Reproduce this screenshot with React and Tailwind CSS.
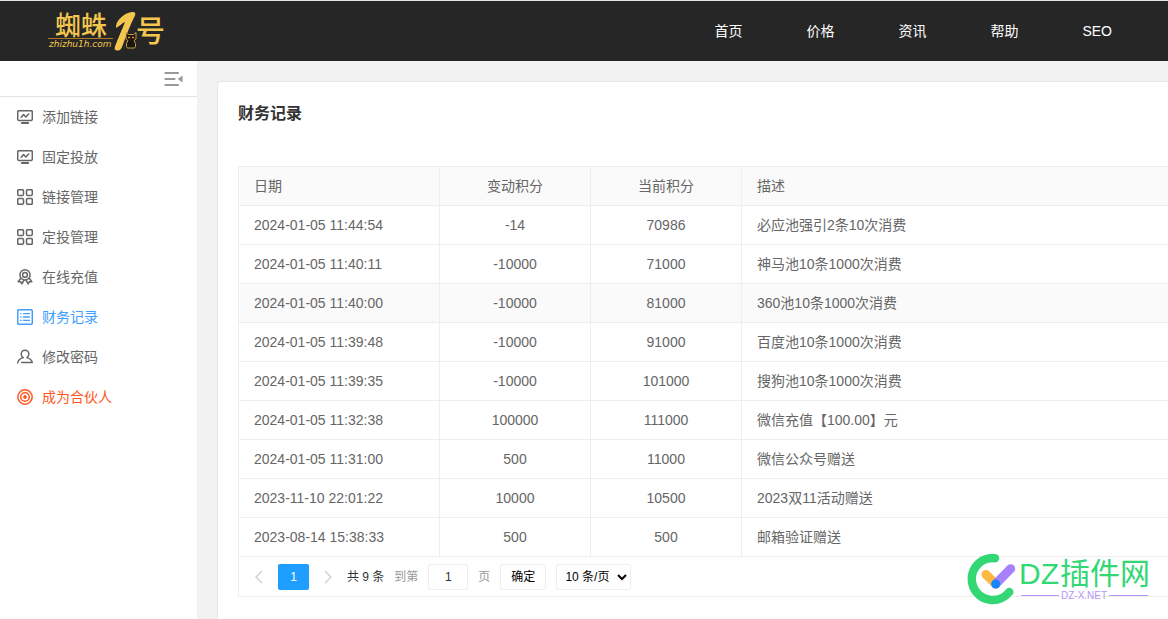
import React from "react";

const navLinks = ["首页", "价格", "资讯", "帮助", "SEO"];

const records = [
  ["2024-01-05 11:44:54", "-14", "70986", "必应池强引2条10次消费"],
  ["2024-01-05 11:40:11", "-10000", "71000", "神马池10条1000次消费"],
  ["2024-01-05 11:40:00", "-10000", "81000", "360池10条1000次消费"],
  ["2024-01-05 11:39:48", "-10000", "91000", "百度池10条1000次消费"],
  ["2024-01-05 11:39:35", "-10000", "101000", "搜狗池10条1000次消费"],
  ["2024-01-05 11:32:38", "100000", "111000", "微信充值【100.00】元"],
  ["2024-01-05 11:31:00", "500", "11000", "微信公众号赠送"],
  ["2023-11-10 22:01:22", "10000", "10500", "2023双11活动赠送"],
  ["2023-08-14 15:38:33", "500", "500", "邮箱验证赠送"],
];
const highlightedRow = 2;

function Icon({ children }) {
  return (
    <svg
      className="size-4 shrink-0"
      viewBox="0 0 16 16"
      fill="none"
      stroke="currentColor"
      strokeWidth="1.5"
      strokeLinecap="round"
      strokeLinejoin="round"
      aria-hidden="true"
    >
      {children}
    </svg>
  );
}

const MonitorIcon = () => (
  <Icon>
    <rect x="0.7" y="1.7" width="14.6" height="9.8" rx="1.2" />
    <path d="M4.2 8.2 6.6 5.6 8.8 8 11.8 5" />
    <path d="M4.8 14h6.4" strokeWidth="1.8" />
  </Icon>
);

const GridIcon = () => (
  <Icon>
    <rect x="0.7" y="0.7" width="5.8" height="5.8" rx="1.2" />
    <rect x="9.5" y="0.7" width="5.8" height="5.8" rx="1.2" />
    <rect x="0.7" y="9.5" width="5.8" height="5.8" rx="1.2" />
    <rect x="9.5" y="9.5" width="5.8" height="5.8" rx="1.2" />
  </Icon>
);

const MedalIcon = () => (
  <Icon>
    <circle cx="8" cy="5.9" r="5.1" />
    <circle cx="8" cy="5.9" r="2.4" />
    <path d="M3.6 9.4 1.2 12.8l2.4-.1 1.3 2.2L7 11.2M12.4 9.4l2.4 3.4-2.4-.1-1.3 2.2L9 11.2" />
  </Icon>
);

const ListIcon = () => (
  <Icon>
    <rect x="0.7" y="0.7" width="14.6" height="14.6" rx="1.4" />
    <path d="M3.7 4.6h.4M6.6 4.6h5.8M3.7 8h.4M6.6 8h5.8M3.7 11.4h.4M6.6 11.4h5.8" strokeWidth="1.3" />
  </Icon>
);

const UserIcon = () => (
  <Icon>
    <path d="M6 8.6C4.7 7.7 4.2 6.4 4.2 5a3.8 3.8 0 0 1 7.6 0c0 1.4-.5 2.7-1.8 3.6 2.7.8 4.9 2.3 5.2 5H4.7" />
    <path d="M6 8.6C3 9.6 1 11 .7 13.8" />
  </Icon>
);

const TargetIcon = () => (
  <Icon>
    <circle cx="8" cy="8" r="7.2" />
    <circle cx="8" cy="8" r="4.3" />
    <circle cx="8" cy="8" r="1.9" fill="currentColor" stroke="none" />
  </Icon>
);

const menu = [
  { label: "添加链接", icon: MonitorIcon, tone: "text-[#666]" },
  { label: "固定投放", icon: MonitorIcon, tone: "text-[#666]" },
  { label: "链接管理", icon: GridIcon, tone: "text-[#666]" },
  { label: "定投管理", icon: GridIcon, tone: "text-[#666]" },
  { label: "在线充值", icon: MedalIcon, tone: "text-[#666]" },
  { label: "财务记录", icon: ListIcon, tone: "text-[#409eff]" },
  { label: "修改密码", icon: UserIcon, tone: "text-[#666]" },
  { label: "成为合伙人", icon: TargetIcon, tone: "text-[#ff5722]" },
];

function Logo() {
  return (
    <svg className="h-[42px] w-[120px] overflow-visible" viewBox="0 0 120 42" role="img" aria-label="蜘蛛1号">
      <g fill="#f3c74e" fontFamily='"Noto Sans CJK SC", sans-serif'>
        <text x="9" y="25" fontSize="26" fontWeight="500">蜘蛛</text>
        <text x="90" y="32" fontSize="29" fontWeight="500">号</text>
        <text x="3" y="37" fontSize="9" fontStyle="italic" fontFamily='"DejaVu Sans", sans-serif'>
          zhizhu1h.com
        </text>
        <path d="M70 18C69 12 77 3 86 2c3-.4 4 1 3 3.500C84 15 80 26 76 37c-1 2-2 3.500-4 3.500-3 .3-4-1-3-4C72 28 76 20 79 12c-3 1-5 4-9 6Z" />
      </g>
      <path d="M2 28.5h65" stroke="#a9782a" />
      <path
        d="M80 22.5l2.5 2h5l2.500-2V29l-2 1.500 1.500 3v3l-1 1.500h-7l-1-1.500v-3l1.500-3L80 29Z"
        fill="#181512"
        stroke="#d9ac45"
        strokeWidth="0.9"
      />
      <path d="M82 27.500h2.200M86 27.500h2.200" stroke="#e88b2b" strokeWidth="1.6" />
    </svg>
  );
}

function Watermark() {
  return (
    <svg
      className="pointer-events-none absolute right-[18px] top-[553px] h-[54px] w-[182px] overflow-visible"
      viewBox="0 0 182 54"
      aria-hidden="true"
    >
      <g fill="none" strokeLinecap="round">
        <path d="M27 5.2A21 21 0 1 0 41.3 39" stroke="#33d774" strokeWidth="8.5" />
        <path d="M18 21.5 27.7 31" stroke="#ffb83f" strokeWidth="9" />
        <path d="M27.7 31 42.7 15.7" stroke="#a780fb" strokeWidth="9" />
      </g>
      <circle cx="27.7" cy="31" r="4.5" fill="#1686fb" />
      <g fill="#33d774">
        <text x="51" y="31" fontSize="30" fontFamily='"Liberation Sans", sans-serif'>DZ</text>
        <text x="92" y="31" fontSize="30" fontFamily='"Noto Sans CJK SC", sans-serif'>插件网</text>
      </g>
      <path d="M53 42.5h38M141 42.5h39" stroke="#b497f8" />
      <text x="93" y="46" fontSize="10" fill="#b497f8" fontFamily='"Liberation Sans", sans-serif'>DZ-X.NET</text>
    </svg>
  );
}

function Chevron({ d }) {
  return (
    <svg className="h-3.5 w-2" viewBox="0 0 8 14" fill="none" stroke="#d2d2d2" strokeWidth="1.5" aria-hidden="true">
      <path d={d} />
    </svg>
  );
}

function Pager() {
  return (
    <div className="flex h-10 items-center border-b border-l border-[#eee] pl-4 text-xs text-[#333]">
      <button type="button" aria-label="上一页" className="mr-[15px]">
        <Chevron d="M7 1 1 7l6 6" />
      </button>
      <button type="button" aria-current="page" className="h-[26px] w-[31px] rounded-xs bg-[#1e9fff] text-white">
        1
      </button>
      <button type="button" aria-label="下一页" className="mx-[15px]">
        <Chevron d="M1 1l6 6-6 6" />
      </button>
      <span>共 9 条</span>
      <label className="ml-2.5 flex items-center gap-2.5 text-[#999]">
        到第
        <input
          type="text"
          defaultValue="1"
          className="h-[26px] w-10 rounded-xs border border-[#eee] bg-white text-center text-[#333]"
        />
        页
      </label>
      <button type="button" className="ml-2.5 h-[26px] w-[46px] rounded-xs border border-[#eee] bg-white text-black">
        确定
      </button>
      <select
        aria-label="每页条数"
        className="ml-2.5 h-[26px] w-[75px] rounded-xs border border-[#eee] bg-white pl-1 text-black"
      >
        <option>10 条/页</option>
        <option>20 条/页</option>
      </select>
    </div>
  );
}

function RecordTable() {
  const cell = "h-[39px] border border-[#eee] px-[15px] py-0 font-normal";
  return (
    <table className="w-full table-fixed border-collapse text-sm text-[#666]">
      <colgroup>
        <col className="w-[201px]" />
        <col className="w-[151px]" />
        <col className="w-[151px]" />
        <col />
      </colgroup>
      <thead className="bg-[#fafafa]">
        <tr>
          <th className={`${cell} text-left`}>日期</th>
          <th className={`${cell} text-center`}>变动积分</th>
          <th className={`${cell} text-center`}>当前积分</th>
          <th className={`${cell} border-r-0 text-left`}>描述</th>
        </tr>
      </thead>
      <tbody>
        {records.map(([date, change, balance, note], i) => (
          <tr key={date} className={i === highlightedRow ? "bg-[#fafafa]" : "bg-white"}>
            <td className={cell}>{date}</td>
            <td className={`${cell} text-center`}>{change}</td>
            <td className={`${cell} text-center`}>{balance}</td>
            <td className={`${cell} border-r-0`}>{note}</td>
          </tr>
        ))}
      </tbody>
    </table>
  );
}

export default function App() {
  return (
    <div className='relative flex min-h-screen flex-col overflow-hidden bg-[#f2f2f2] font-["Liberation_Sans","Noto_Sans_CJK_SC",sans-serif]'>
      <header className="flex h-[61px] items-center justify-between border-t border-[#dfe5e3] bg-[#262626] pl-[46px] pr-14">
        <a href="#home">
          <Logo />
        </a>
        <nav className="flex gap-16 text-sm text-white">
          {navLinks.map((label) => (
            <a key={label} href="#nav">
              {label}
            </a>
          ))}
        </nav>
      </header>
      <div className="flex flex-1">
        <aside className="w-[197px] shrink-0 bg-white">
          <div className="flex h-9 items-center justify-end border-b border-[#dfe3e8] pr-3.5">
            <button type="button" aria-label="收起菜单">
              <svg className="h-4 w-[19px]" viewBox="0 0 19 16" aria-hidden="true">
                <path d="M1.5 2h12.5M1.5 8h9M1.5 14h12.5" stroke="#999" strokeWidth="2.2" strokeLinecap="round" />
                <path d="M18.5 4.5v7L13.7 8Z" fill="#999" />
              </svg>
            </button>
          </div>
          <nav>
            {menu.map(({ label, icon: ItemIcon, tone }) => (
              <a key={label} href="#menu" className={`flex h-10 items-center gap-[9px] pl-[17px] text-sm ${tone}`}>
                <ItemIcon />
                {label}
              </a>
            ))}
          </nav>
        </aside>
        <main className="flex min-w-0 flex-1 flex-col pl-5 pt-5">
          <section className="flex-1 rounded-tl border-l border-t border-[#e6e6e6] bg-white pl-5 pt-5">
            <h1 className="mb-10 text-base font-bold text-[#333]">财务记录</h1>
            <RecordTable />
            <Pager />
          </section>
        </main>
      </div>
      <Watermark />
    </div>
  );
}
